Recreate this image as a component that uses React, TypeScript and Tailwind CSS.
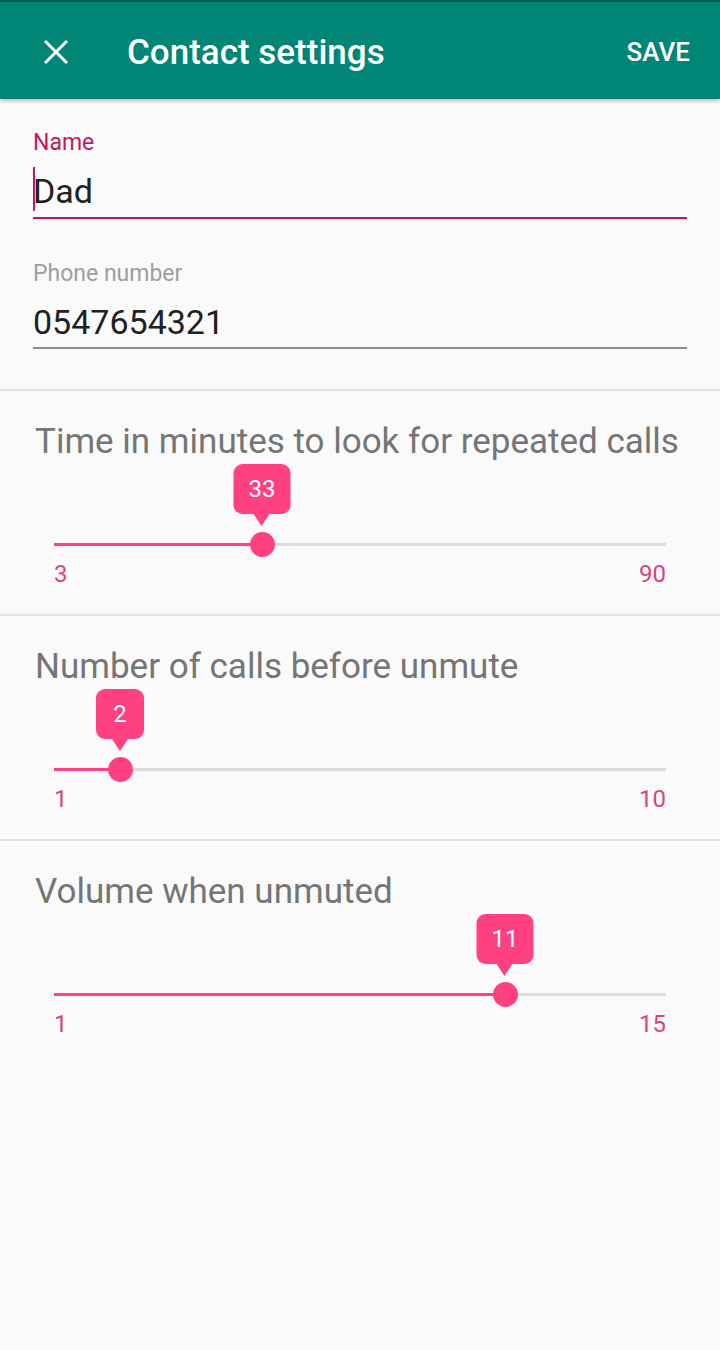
import React from "react";

type SliderProps = { title: string; min: number; max: number; value: number; pos: number; last?: boolean };

function SliderSection({ title, min, max, value, pos, last }: SliderProps) {
  return (
    <div className={last ? "pt-[31px] pb-[26px]" : "pt-[31px] pb-[26px] border-b-2 border-[#e2e2e2]"}>
      <div className="px-[35px] h-[40px] text-[35px] leading-[40px] text-[#757575] whitespace-nowrap">{title}</div>
      <div className="relative mx-[54px] h-[98px]">
        <div className="absolute left-0 right-0 top-[81px] h-[3px] bg-[#dcdcdc]" />
        <div className="absolute left-0 top-[81px] h-[3px] bg-[#ff4081]" style={{ width: pos }} />
        <div
          className="absolute top-[70px] w-[25px] h-[25px] -ml-[12px] rounded-full bg-[#ff4081]"
          style={{ left: pos }}
        />
        <div className="absolute top-[2px] -translate-x-1/2 flex flex-col items-center" style={{ left: pos }}>
          <div className="h-[50px] min-w-[48px] px-[15px] rounded-[9px] bg-[#ff4081] text-white text-[24px] flex items-center justify-center">
            {value}
          </div>
          <div className="w-0 h-0 border-l-[8px] border-r-[8px] border-t-[12px] border-l-transparent border-r-transparent border-t-[#ff4081]" />
        </div>
      </div>
      <div className="mx-[54px] h-[28px] flex justify-between text-[24px] leading-[28px] text-[#d9467b]">
        <span>{min}</span>
        <span>{max}</span>
      </div>
    </div>
  );
}

export default function App() {
  return (
    <div className="w-[720px] h-[1350px] bg-[#fafafa] font-['Roboto',sans-serif] overflow-hidden">
      <div className="relative h-[99px] bg-[#008577] border-t-2 border-[#00574b] shadow-[0_2px_4px_rgba(0,0,0,0.25)] flex items-center">
        <svg className="ml-[44px] mt-[2px]" width="24" height="24" viewBox="0 0 24 24">
          <path d="M1 1L23 23M23 1L1 23" stroke="white" strokeWidth="3" strokeLinecap="butt" />
        </svg>
        <div className="ml-[59px] mt-[3px] text-white text-[35px] font-medium leading-none">Contact settings</div>
        <div className="ml-auto mr-[30px] mt-[2px] text-white text-[26px] font-medium leading-none">SAVE</div>
      </div>

      <div className="px-[33px] pt-[33px] pb-[40px] border-b-2 border-[#e2e2e2]">
        <div className="h-[22px] text-[23px] leading-[22px] text-[#c2185b]">Name</div>
        <div className="relative mt-[15px] h-[44px] text-[34px] leading-[44px] text-[#212121]">
          Dad
          <div className="absolute left-0 top-[-2px] w-[2px] h-[44px] bg-[#c2185b]" />
        </div>
        <div className="mt-[4px] h-[2px] bg-[#c2185b]" />
        <div className="mt-[44px] h-[22px] text-[23px] leading-[22px] text-[#9e9e9e]">Phone number</div>
        <div className="mt-[15px] h-[44px] text-[34px] leading-[44px] text-[#212121]">0547654321</div>
        <div className="mt-[3px] h-[2px] bg-[#8f8f8f]" />
      </div>

      <SliderSection title="Time in minutes to look for repeated calls" min={3} max={90} value={33} pos={208} />
      <SliderSection title="Number of calls before unmute" min={1} max={10} value={2} pos={66} />
      <SliderSection title="Volume when unmuted" min={1} max={15} value={11} pos={451} last />
    </div>
  );
}
